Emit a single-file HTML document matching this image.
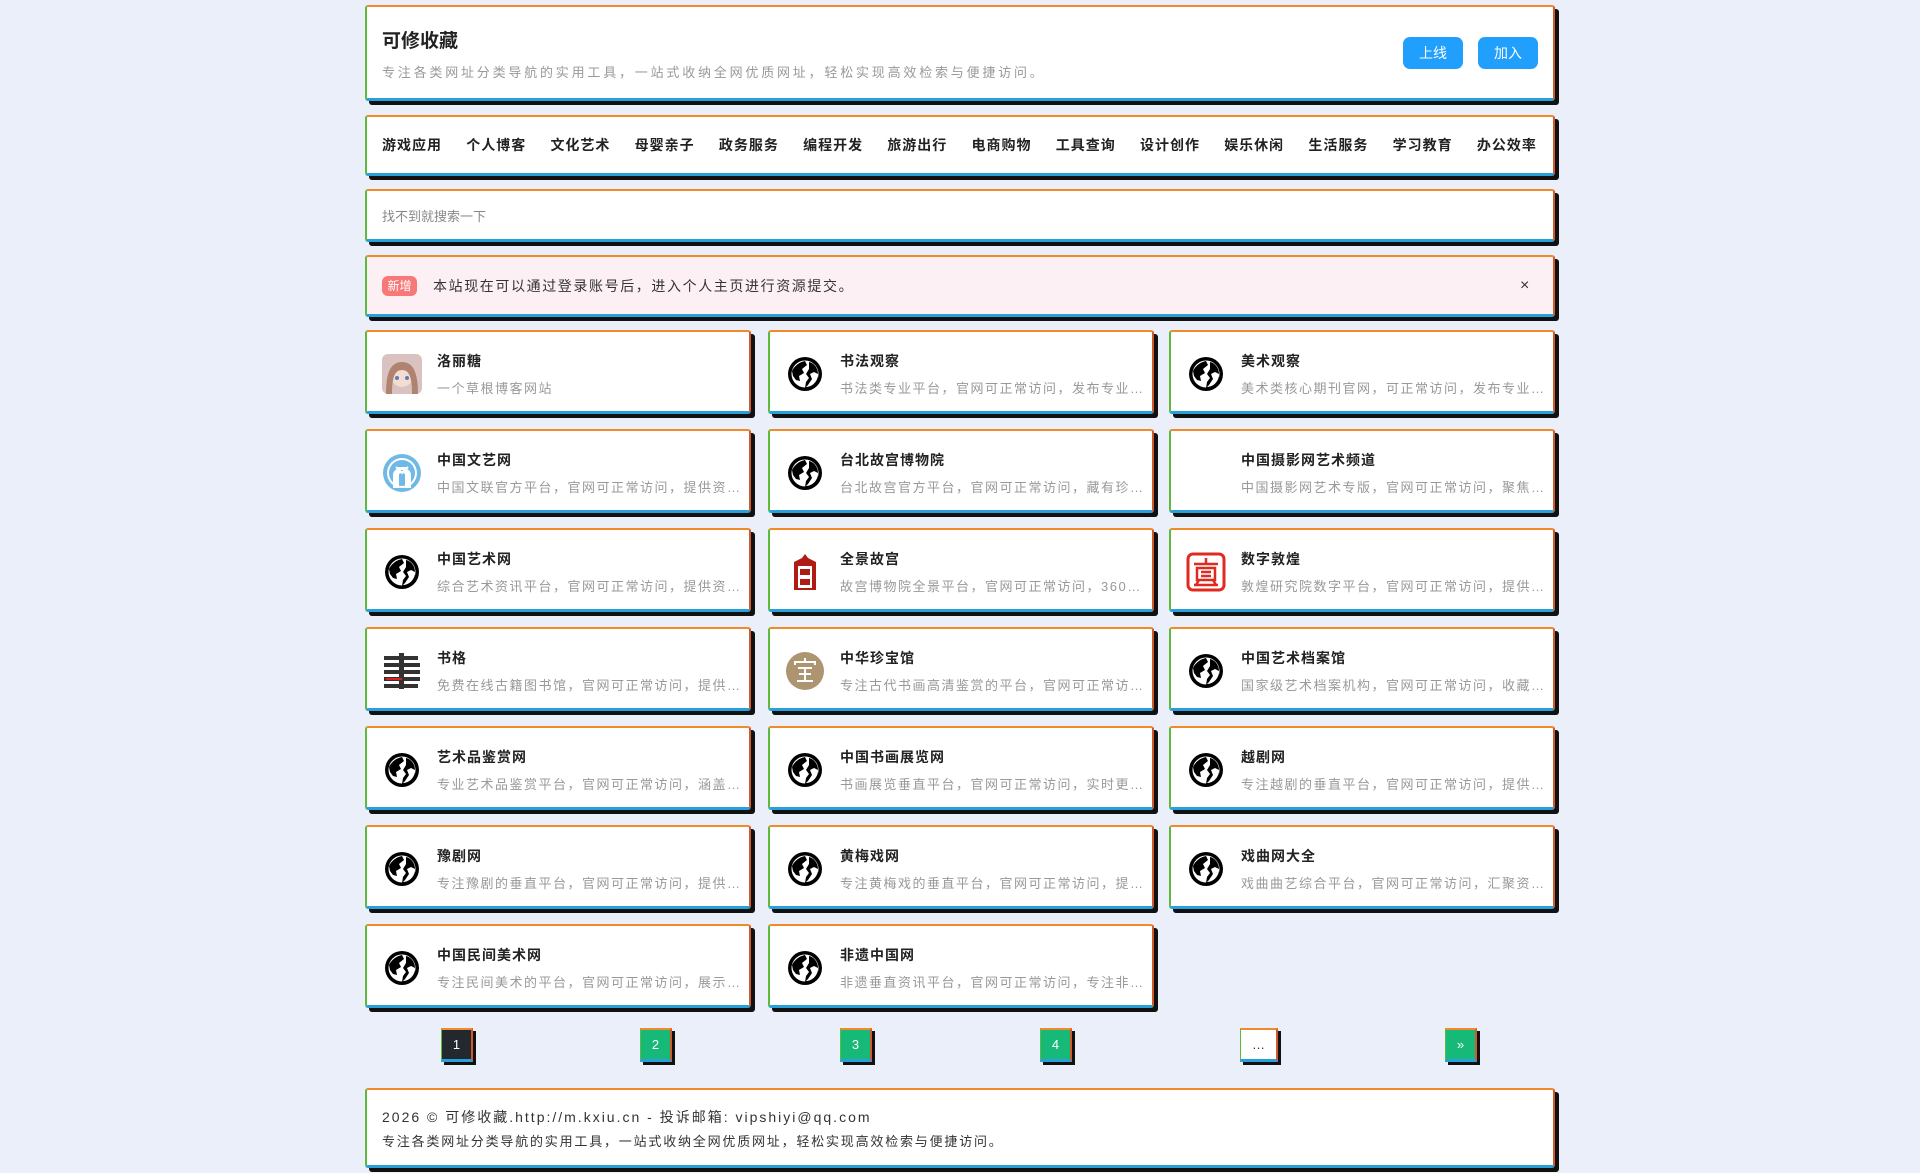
<!DOCTYPE html>
<html><head><meta charset="utf-8"><style>
*{box-sizing:border-box;margin:0;padding:0}
body{width:1920px;height:1173px;background:#ebeffa;font-family:"Liberation Sans","Noto Sans CJK SC",sans-serif;position:relative;overflow:hidden;color:#222}
.b{position:absolute;background:#fff;border-top:2px solid #f28a2a;border-left:2px solid #5cbb3c;border-right:2px solid #cf5a2c;border-bottom:3px solid #27a0dc;border-radius:3px;box-shadow:4px 4px 0 #111}
.t{position:absolute;white-space:nowrap}
.btn{position:absolute;top:37px;width:60px;height:32px;background:#20a0fc;color:#fff;border-radius:7px;font-size:14px;text-align:center;line-height:32px}
.nav{position:absolute;left:382px;right:383px;top:135px;display:flex;justify-content:space-between;font-size:14px;font-weight:bold;letter-spacing:1px;color:#222}
.card .ic{position:absolute;left:15px;top:22px;width:40px;height:40px}
.card .ti{position:absolute;left:70px;top:19px;font-size:14px;font-weight:bold;letter-spacing:1px;color:#222}
.card .de{position:absolute;left:70px;top:46px;width:306px;font-size:13px;color:#999;letter-spacing:1.5px;white-space:nowrap;overflow:hidden;text-overflow:ellipsis}
.pg{position:absolute;top:1028px;width:32px;height:34px;border-top:2px solid #f28a2a;border-left:1px solid #5cbb3c;border-right:2px solid #cf5a2c;border-bottom:3px solid #27a0dc;box-shadow:3px 3px 0 #111;color:#fff;font-size:13px;text-align:center;line-height:29px;background:#17b978}
</style></head><body>
<svg width="0" height="0" style="position:absolute"><defs>
<symbol id="g" viewBox="0 0 40 40"><circle cx="20" cy="20" r="17" fill="#000"/><circle cx="20" cy="20" r="13.5" fill="#fff"/><path d="M7 17 C10 11 15 8 20 7 L22 11 L17 15 L19 19 L14 22 L15 27 L11 26 L8 22Z" fill="#000"/><path d="M24 8 C29 9 33 14 33 20 L29 18 L25 20 L27 25 L23 31 L21 33 C27 33 32 28 33 22 L33 30 C29 34 24 34 20 34 L21 28 L24 24 L21 20 L24 15 Z" fill="#000"/></symbol>
</defs></svg>

<div class="b" style="left:365px;top:5px;width:1190px;height:96px"></div>
<div class="t" style="left:382px;top:26px;font-size:19px;font-weight:bold;color:#222">可修收藏</div>
<div class="t" style="left:382px;top:62px;font-size:13px;color:#999;letter-spacing:2.8px">专注各类网址分类导航的实用工具，一站式收纳全网优质网址，轻松实现高效检索与便捷访问。</div>
<div class="btn" style="left:1403px">上线</div>
<div class="btn" style="left:1478px">加入</div>

<div class="b" style="left:365px;top:115px;width:1190px;height:61px"></div>
<div class="nav"><span>游戏应用</span><span>个人博客</span><span>文化艺术</span><span>母婴亲子</span><span>政务服务</span><span>编程开发</span><span>旅游出行</span><span>电商购物</span><span>工具查询</span><span>设计创作</span><span>娱乐休闲</span><span>生活服务</span><span>学习教育</span><span>办公效率</span></div>

<div class="b" style="left:365px;top:189px;width:1190px;height:53px"></div>
<div class="t" style="left:382px;top:206px;font-size:13px;color:#888">找不到就搜索一下</div>

<div class="b" style="left:365px;top:255px;width:1190px;height:62px;background:#fdf0f4"></div>
<div class="t" style="left:382px;top:276px;width:35px;height:20px;background:#f87878;color:#fff;border-radius:6px;font-size:12px;text-align:center;line-height:20px">新增</div>
<div class="t" style="left:433px;top:276px;font-size:14px;color:#333;letter-spacing:1.6px;line-height:20px">本站现在可以通过登录账号后，进入个人主页进行资源提交。</div>
<div class="t" style="left:1520px;top:276px;font-size:16px;color:#333;line-height:20px">×</div>

<div id="cards"></div>
<script>
var d=[
["洛丽糖","一个草根博客网站","a"],["书法观察","书法类专业平台，官网可正常访问，发布专业内容资讯","g"],["美术观察","美术类核心期刊官网，可正常访问，发布专业内容","g"],
["中国文艺网","中国文联官方平台，官网可正常访问，提供资讯服务","w"],["台北故宫博物院","台北故宫官方平台，官网可正常访问，藏有珍品文物","g"],["中国摄影网艺术频道","中国摄影网艺术专版，官网可正常访问，聚焦摄影","n"],
["中国艺术网","综合艺术资讯平台，官网可正常访问，提供资讯服务","g"],["全景故宫","故宫博物院全景平台，官网可正常访问，360度全景","q"],["数字敦煌","敦煌研究院数字平台，官网可正常访问，提供资源","d"],
["书格","免费在线古籍图书馆，官网可正常访问，提供下载","s"],["中华珍宝馆","专注古代书画高清鉴赏的平台，官网可正常访问服务","z"],["中国艺术档案馆","国家级艺术档案机构，官网可正常访问，收藏档案","g"],
["艺术品鉴赏网","专业艺术品鉴赏平台，官网可正常访问，涵盖多类","g"],["中国书画展览网","书画展览垂直平台，官网可正常访问，实时更新展讯","g"],["越剧网","专注越剧的垂直平台，官网可正常访问，提供资讯","g"],
["豫剧网","专注豫剧的垂直平台，官网可正常访问，提供资讯","g"],["黄梅戏网","专注黄梅戏的垂直平台，官网可正常访问，提供资讯","g"],["戏曲网大全","戏曲曲艺综合平台，官网可正常访问，汇聚资源内容","g"],
["中国民间美术网","专注民间美术的平台，官网可正常访问，展示作品","g"],["非遗中国网","非遗垂直资讯平台，官网可正常访问，专注非遗文化","g"]];
var ic={
g:'<svg class="ic" viewBox="0 0 40 40"><use href="#g"/></svg>',
a:'<svg class="ic" viewBox="0 0 40 40"><rect width="40" height="40" rx="6" fill="#d9c2c0"/><circle cx="20" cy="22" r="11" fill="#f3dcd2"/><path d="M4 40 C4 20 8 8 20 8 C32 8 36 20 36 40 L30 40 C30 25 28 16 20 16 C12 16 10 25 10 40Z" fill="#b08370"/><circle cx="15" cy="24" r="2" fill="#5a7fb3"/><circle cx="25" cy="24" r="2" fill="#5a7fb3"/></svg>',
w:'<svg class="ic" viewBox="0 0 40 40"><circle cx="20" cy="20" r="19" fill="#6fb9e6"/><circle cx="20" cy="20" r="15" fill="#fff"/><circle cx="20" cy="20" r="13" fill="#6fb9e6"/><path d="M12 34 L12 22 C12 14 28 14 28 22 L28 34 L24 34 L24 22 C24 18 16 18 16 22 L16 34Z M14 14 L20 20 L26 14" stroke="#fff" stroke-width="2" fill="#fff"/></svg>',
n:'<svg class="ic" viewBox="0 0 40 40"></svg>',
q:'<svg class="ic" viewBox="0 0 40 40"><path d="M20 2 L23 6 L31 10 L31 38 L9 38 L9 10 L17 6Z" fill="#b01c14"/><rect x="13" y="14" width="14" height="22" fill="#fff"/><rect x="15" y="17" width="10" height="6" fill="#b01c14"/><rect x="15" y="27" width="10" height="6" fill="#b01c14"/></svg>',
d:'<svg class="ic" viewBox="0 0 40 40"><rect x="2" y="2" width="36" height="36" rx="5" fill="#fff" stroke="#e02a20" stroke-width="3"/><path d="M8 12 L32 12 M20 6 L20 12 M11 16 L29 16 L29 28 L11 28Z M15 20 L25 20 M15 24 L25 24 M8 33 L32 33 M13 28 L10 33 M27 28 L30 33" stroke="#e02a20" stroke-width="2.5" fill="none"/></svg>',
s:'<svg class="ic" viewBox="0 0 40 40"><g fill="#333"><rect x="2" y="5" width="34" height="4"/><rect x="2" y="12" width="36" height="4"/><rect x="2" y="19" width="36" height="4"/><rect x="2" y="26" width="36" height="4"/><rect x="2" y="33" width="34" height="4"/><rect x="17" y="2" width="5" height="36"/></g><rect x="4" y="27" width="16" height="2" fill="#e02020"/></svg>',
z:'<svg class="ic" viewBox="0 0 40 40"><circle cx="20" cy="20" r="19" fill="#ae9571"/><path d="M20 7 L20 10 M10 14 L10 11 L30 11 L30 14 M13 17 L27 17 M20 17 L20 30 M14 23 L26 23 M12 30 L28 30" stroke="#fff" stroke-width="2" fill="none"/></svg>'};
var h='';d.forEach(function(c,i){var col=i%3,row=Math.floor(i/3);var x=[365,768,1169][col],y=330+row*99;
h+='<div class="b card" style="left:'+x+'px;top:'+y+'px;width:386px;height:84px">'+ic[c[2]]+'<div class="ti">'+c[0]+'</div><div class="de">'+c[1]+'</div></div>';});
document.getElementById('cards').innerHTML=h;
</script>

<div class="pg" style="left:441px;background:#23272e">1</div>
<div class="pg" style="left:640px">2</div>
<div class="pg" style="left:840px">3</div>
<div class="pg" style="left:1040px">4</div>
<div class="pg" style="left:1240px;background:#fff;color:#333;width:38px">…</div>
<div class="pg" style="left:1445px">»</div>

<div class="b" style="left:365px;top:1088px;width:1190px;height:80px"></div>
<div class="t" style="left:382px;top:1107px;font-size:14px;color:#333;letter-spacing:2px">2026 © 可修收藏.http://m.kxiu.cn - 投诉邮箱: vipshiyi@qq.com</div>
<div class="t" style="left:382px;top:1131px;font-size:13px;color:#333;letter-spacing:1.8px">专注各类网址分类导航的实用工具，一站式收纳全网优质网址，轻松实现高效检索与便捷访问。</div>
</body></html>
